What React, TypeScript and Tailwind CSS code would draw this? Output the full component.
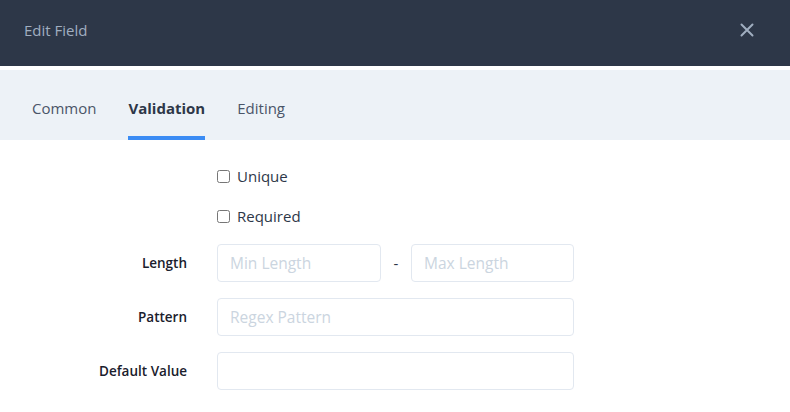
import React, { useState } from 'react';

const tabs = ['Common', 'Validation', 'Editing'];

export default function App() {
  const [activeTab, setActiveTab] = useState('Validation');
  const [unique, setUnique] = useState(false);
  const [required, setRequired] = useState(false);

  return (
    <div
      className="w-[790px] h-[412px] bg-white overflow-hidden"
      style={{ fontFamily: '"Open Sans", "Noto Sans", sans-serif' }}
    >
      {/* Header */}
      <div className="h-[66px] bg-[#2d3748] flex items-center justify-between pl-6 pr-[36px] pb-[6px]">
        <h2 className="text-[15px] text-[#a0aec0]">Edit Field</h2>
        <button className="text-[#a0aec0]">
          <svg width="14" height="14" viewBox="0 0 14 14" fill="none">
            <path d="M1.5 1.5L12.5 12.5M12.5 1.5L1.5 12.5" stroke="currentColor" strokeWidth="2" strokeLinecap="round" />
          </svg>
        </button>
      </div>

      {/* Tabs */}
      <div className="mt-1 h-[70px] bg-[#edf2f7] flex items-end gap-8 px-8">
        {tabs.map((tab) => (
          <button
            key={tab}
            onClick={() => setActiveTab(tab)}
            className={`h-full flex items-center border-b-4 pt-[11px] text-[15px] ${
              activeTab === tab
                ? 'border-[#3b8cf4] font-bold text-[#2d3748]'
                : 'border-transparent text-[#4a5568]'
            }`}
          >
            {tab}
          </button>
        ))}
      </div>

      {/* Form */}
      <div className="pt-[26px] flex flex-col">
        <div className="pl-[217px] flex flex-col gap-[19px]">
          <label className="flex items-center gap-[7px] h-[21px] text-[15px] text-[#2d3748]">
            <input
              type="checkbox"
              checked={unique}
              onChange={(e) => setUnique(e.target.checked)}
              className="w-[13px] h-[13px]"
            />
            Unique
          </label>
          <label className="flex items-center gap-[7px] h-[21px] text-[15px] text-[#2d3748]">
            <input
              type="checkbox"
              checked={required}
              onChange={(e) => setRequired(e.target.checked)}
              className="w-[13px] h-[13px]"
            />
            Required
          </label>
        </div>

        <div className="mt-[17px] flex flex-col gap-4">
          <div className="flex items-center">
            <span className="w-[187px] text-right text-[13.5px] font-semibold text-[#1a202c]">Length</span>
            <div className="ml-[30px] flex items-center">
              <input
                placeholder="Min Length"
                className="w-[164px] h-[38px] px-3 border border-[#e2e8f0] rounded text-[15.5px] placeholder:text-[#cbd5e0] outline-none"
              />
              <span className="w-[30px] text-center text-[15px] text-[#2d3748]">-</span>
              <input
                placeholder="Max Length"
                className="w-[163px] h-[38px] px-3 border border-[#e2e8f0] rounded text-[15.5px] placeholder:text-[#cbd5e0] outline-none"
              />
            </div>
          </div>
          <div className="flex items-center">
            <span className="w-[187px] text-right text-[13.5px] font-semibold text-[#1a202c]">Pattern</span>
            <input
              placeholder="Regex Pattern"
              className="ml-[30px] w-[357px] h-[38px] px-3 border border-[#e2e8f0] rounded text-[15.5px] placeholder:text-[#cbd5e0] outline-none"
            />
          </div>
          <div className="flex items-center">
            <span className="w-[187px] text-right text-[13.5px] font-semibold text-[#1a202c]">Default Value</span>
            <input
              className="ml-[30px] w-[357px] h-[38px] px-3 border border-[#e2e8f0] rounded text-[15.5px] outline-none"
            />
          </div>
        </div>
      </div>
    </div>
  );
}
